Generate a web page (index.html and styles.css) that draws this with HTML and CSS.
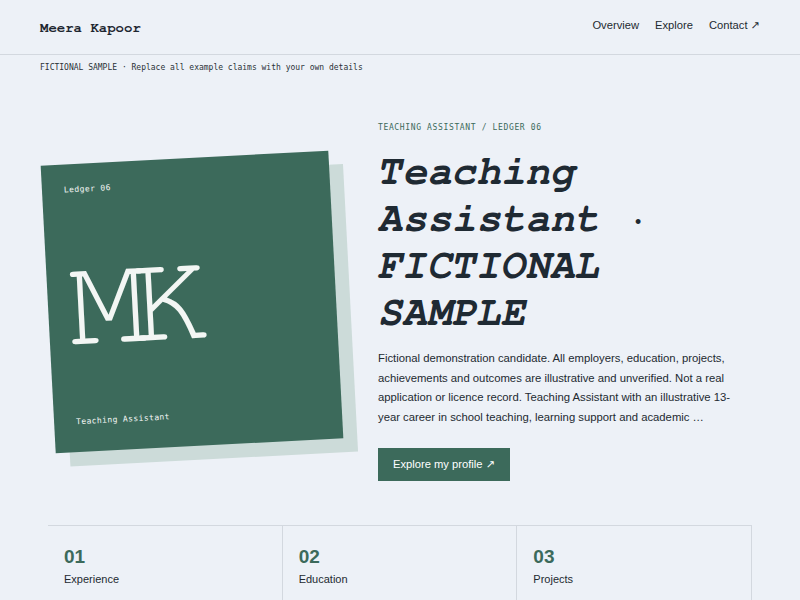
FILE: index.html
```html
<!DOCTYPE html>
<html lang="en">
<head>
<meta charset="utf-8">
<title>Meera Kapoor — Teaching Assistant</title>
<link rel="stylesheet" href="styles.css">
</head>
<body>
<header class="topbar">
  <div class="brand">Meera Kapoor</div>
  <nav class="nav">
    <a href="#overview">Overview</a>
    <a href="#explore">Explore</a>
    <a href="#contact">Contact ↗</a>
  </nav>
</header>
<div class="notice">FICTIONAL SAMPLE · Replace all example claims with your own details</div>
<main>
  <section class="hero">
    <div class="card-wrap">
      <div class="card">
        <span class="card-label">Ledger 06</span>
        <span class="monogram">MK</span>
        <span class="card-label card-role">Teaching Assistant</span>
      </div>
    </div>
    <div class="intro">
      <p class="eyebrow">TEACHING ASSISTANT / LEDGER 06</p>
      <h1 class="title">Teaching Assistant · FICTIONAL SAMPLE</h1>
      <p class="lede">Fictional demonstration candidate. All employers, education, projects, achievements and outcomes are illustrative and unverified. Not a real application or licence record. Teaching Assistant with an illustrative 13-year career in school teaching, learning support and academic …</p>
      <a class="btn" href="#explore">Explore my profile ↗</a>
    </div>
  </section>
  <section class="stats">
    <div class="stat"><div class="stat-num">01</div><div class="stat-label">Experience</div></div>
    <div class="stat"><div class="stat-num">02</div><div class="stat-label">Education</div></div>
    <div class="stat"><div class="stat-num">03</div><div class="stat-label">Projects</div></div>
  </section>
</main>
</body>
</html>
```

FILE: styles.css
```css
* { box-sizing: border-box; }

html, body {
  margin: 0;
  padding: 0;
  background: #edf1f7;
  color: #1f2a33;
  font-family: "Liberation Sans", Arial, "DejaVu Sans", sans-serif;
}

a { color: inherit; text-decoration: none; }

.topbar {
  height: 55px;
  padding: 0 40px;
  display: flex;
  align-items: center;
  justify-content: space-between;
  border-bottom: 1px solid #d3d8df;
}

.brand {
  font-family: "Nimbus Mono PS", "Nimbus Mono L", "FreeMono", "Liberation Mono", monospace;
  font-weight: 700;
  font-size: 14px;
  color: #1d2630;
  padding-top: 2px;
}

.nav {
  display: flex;
  gap: 16px;
  font-size: 11.2px;
  color: #232a31;
  margin-top: -4px;
}

.notice {
  padding: 7px 40px;
  font-family: "DejaVu Sans Mono", monospace;
  font-size: 8px;
  line-height: 12px;
  color: #2b3138;
}

.hero {
  display: grid;
  grid-template-columns: 306px 382px;
  column-gap: 32px;
  align-items: center;
  padding: 41px 40px 44px;
}

.card-wrap {
  padding-left: 8px;
}

.card {
  width: 288px;
  height: 288px;
  background: #3c6a5b;
  color: #f3f6f4;
  transform: rotate(-3deg);
  box-shadow: 14px 14px 0 #ccdbd9;
  padding: 20px 22px 24px;
  display: flex;
  flex-direction: column;
  justify-content: space-between;
  align-items: flex-start;
}

.card-label {
  font-family: "DejaVu Sans Mono", monospace;
  font-size: 8px;
  line-height: 12px;
  letter-spacing: 0.05em;
}

.monogram {
  font-family: "Nimbus Mono PS", "Nimbus Mono L", "FreeMono", "Courier 10 Pitch", "DejaVu Serif", serif;
  font-size: 129px;
  line-height: 100px;
  letter-spacing: -0.12em;
  margin-left: -1px;
}

.intro {
  display: flex;
  flex-direction: column;
  align-items: flex-start;
}

.eyebrow {
  margin: 0;
  font-family: "DejaVu Sans Mono", monospace;
  font-size: 8px;
  line-height: 12px;
  letter-spacing: 0.08em;
  color: #3c6a5b;
}

.title {
  margin: 14px 0 13px;
  font-family: "Nimbus Mono PS", "Nimbus Mono L", "FreeMono", "Liberation Mono", monospace;
  font-weight: 700;
  font-style: italic;
  font-size: 41px;
  line-height: 47px;
  color: #1f2a33;
}

.lede {
  margin: 0;
  max-width: 362px;
  font-size: 11.3px;
  line-height: 19.5px;
  color: #232a31;
}

.btn {
  margin-top: 21px;
  display: inline-block;
  background: #3c6a5b;
  color: #ffffff;
  font-size: 11.2px;
  line-height: 13px;
  padding: 10px 15px;
}

.stats {
  margin: 0 48px;
  display: grid;
  grid-template-columns: repeat(3, 1fr);
  border-top: 1px solid #d3d8df;
}

.stat {
  border-right: 1px solid #d3d8df;
  padding: 18px 16px 16px;
}

.stat-num {
  font-size: 19px;
  line-height: 26px;
  font-weight: 700;
  color: #3c6a5b;
}

.stat-label {
  font-size: 11px;
  line-height: 18px;
  color: #232a31;
}
```
